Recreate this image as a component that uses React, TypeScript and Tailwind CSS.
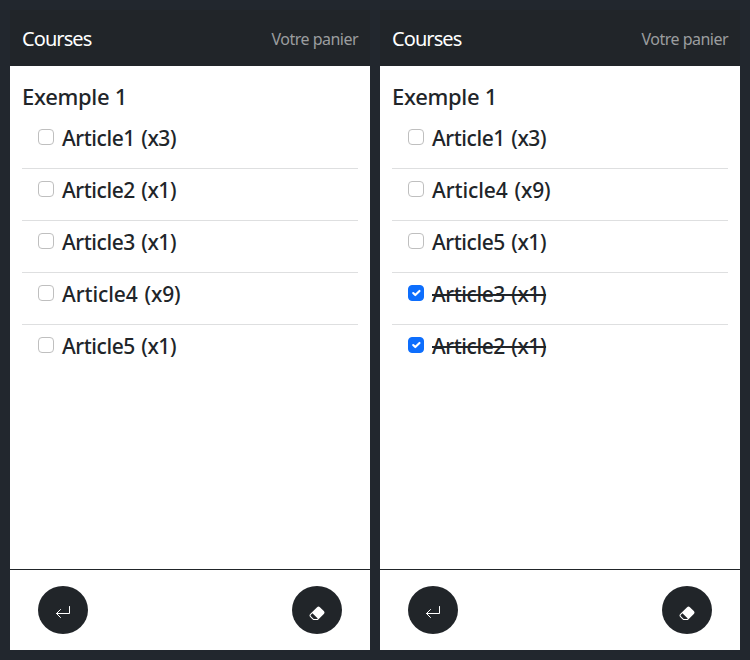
import React from "react";
import { BsEraserFill } from "react-icons/bs";

type Item = { name: string; qty: number; done?: boolean };

const cart: Item[] = [
  { name: "Article1", qty: 3 },
  { name: "Article2", qty: 1 },
  { name: "Article3", qty: 1 },
  { name: "Article4", qty: 9 },
  { name: "Article5", qty: 1 },
];

const sortedCart: Item[] = [
  { name: "Article1", qty: 3 },
  { name: "Article4", qty: 9 },
  { name: "Article5", qty: 1 },
  { name: "Article3", qty: 1, done: true },
  { name: "Article2", qty: 1, done: true },
];

function Checkbox({ checked }: { checked?: boolean }) {
  return (
    <span
      role="checkbox"
      aria-checked={!!checked}
      className={`block size-4 shrink-0 rounded-[4px] border ${
        checked ? "border-[#0d6efd] bg-[#0d6efd]" : "border-[#bfbfbf] bg-white"
      }`}
    >
      {checked && (
        <svg viewBox="0 0 20 20" className="block size-3.5" fill="none" stroke="#fff" strokeWidth="3" strokeLinecap="round" strokeLinejoin="round">
          <path d="m6 10 3 3 6-6" />
        </svg>
      )}
    </span>
  );
}

// Labels that hold the narrow digit 1 are set a little tighter.
function ItemLabel({ item }: { item: Item }) {
  const text = `${item.name} (x${item.qty})`;
  return (
    <span
      className={`h-6 text-[21px] leading-[18px] font-medium whitespace-nowrap [word-spacing:1.5px] ${
        text.includes("1") ? "tracking-[-0.45px]" : "tracking-[-0.1px]"
      } ${item.done ? "line-through decoration-2" : ""}`}
    >
      {text}
    </span>
  );
}

function Phone({ items }: { items: Item[] }) {
  return (
    <section className="flex h-[640px] w-[360px] flex-col bg-white">
      <header className="flex h-14 items-center justify-between bg-[#212529] px-3">
        <span className="pt-0.5 text-[20px] leading-[30px] tracking-[-0.92px] text-white">Courses</span>
        <span className="pt-px text-[16px] leading-6 tracking-[-0.52px] text-[#9b9d9f]">Votre panier</span>
      </header>
      <main className="flex-1 px-3 pt-[17px]">
        <h1 className="h-[34px] text-[22px] leading-[26px] font-medium tracking-[-0.3px]">Exemple 1</h1>
        <ul>
          {items.map((item) => (
            <li key={item.name} className="flex h-[52px] gap-2 border-b border-[#dedfe0] px-4 pt-3 last:border-b-0">
              <Checkbox checked={item.done} />
              <ItemLabel item={item} />
            </li>
          ))}
        </ul>
      </main>
      <footer className="flex h-[81px] justify-between border-t border-[#212529] px-7 pt-4">
        <button className="flex h-12 w-[50px] items-center justify-center rounded-[50%] bg-[#212529] pt-1 text-white">
          <svg viewBox="0 0 16 16" className="size-4" fill="none" stroke="currentColor" strokeLinecap="round" strokeLinejoin="round">
            <path d="M14.5 2.5v7h-13M5.5 5.5l-4 4 4 4" />
          </svg>
        </button>
        <button className="flex h-12 w-[50px] items-center justify-center rounded-[50%] bg-[#212529] pt-1.5 text-white">
          <BsEraserFill className="size-4" />
        </button>
      </footer>
    </section>
  );
}

export default function App() {
  return (
    <div className="flex h-[660px] w-[750px] gap-2.5 bg-[#22272e] p-2.5 font-['Noto_Sans','Open_Sans',sans-serif] text-[#212529]">
      <Phone items={cart} />
      <Phone items={sortedCart} />
    </div>
  );
}
